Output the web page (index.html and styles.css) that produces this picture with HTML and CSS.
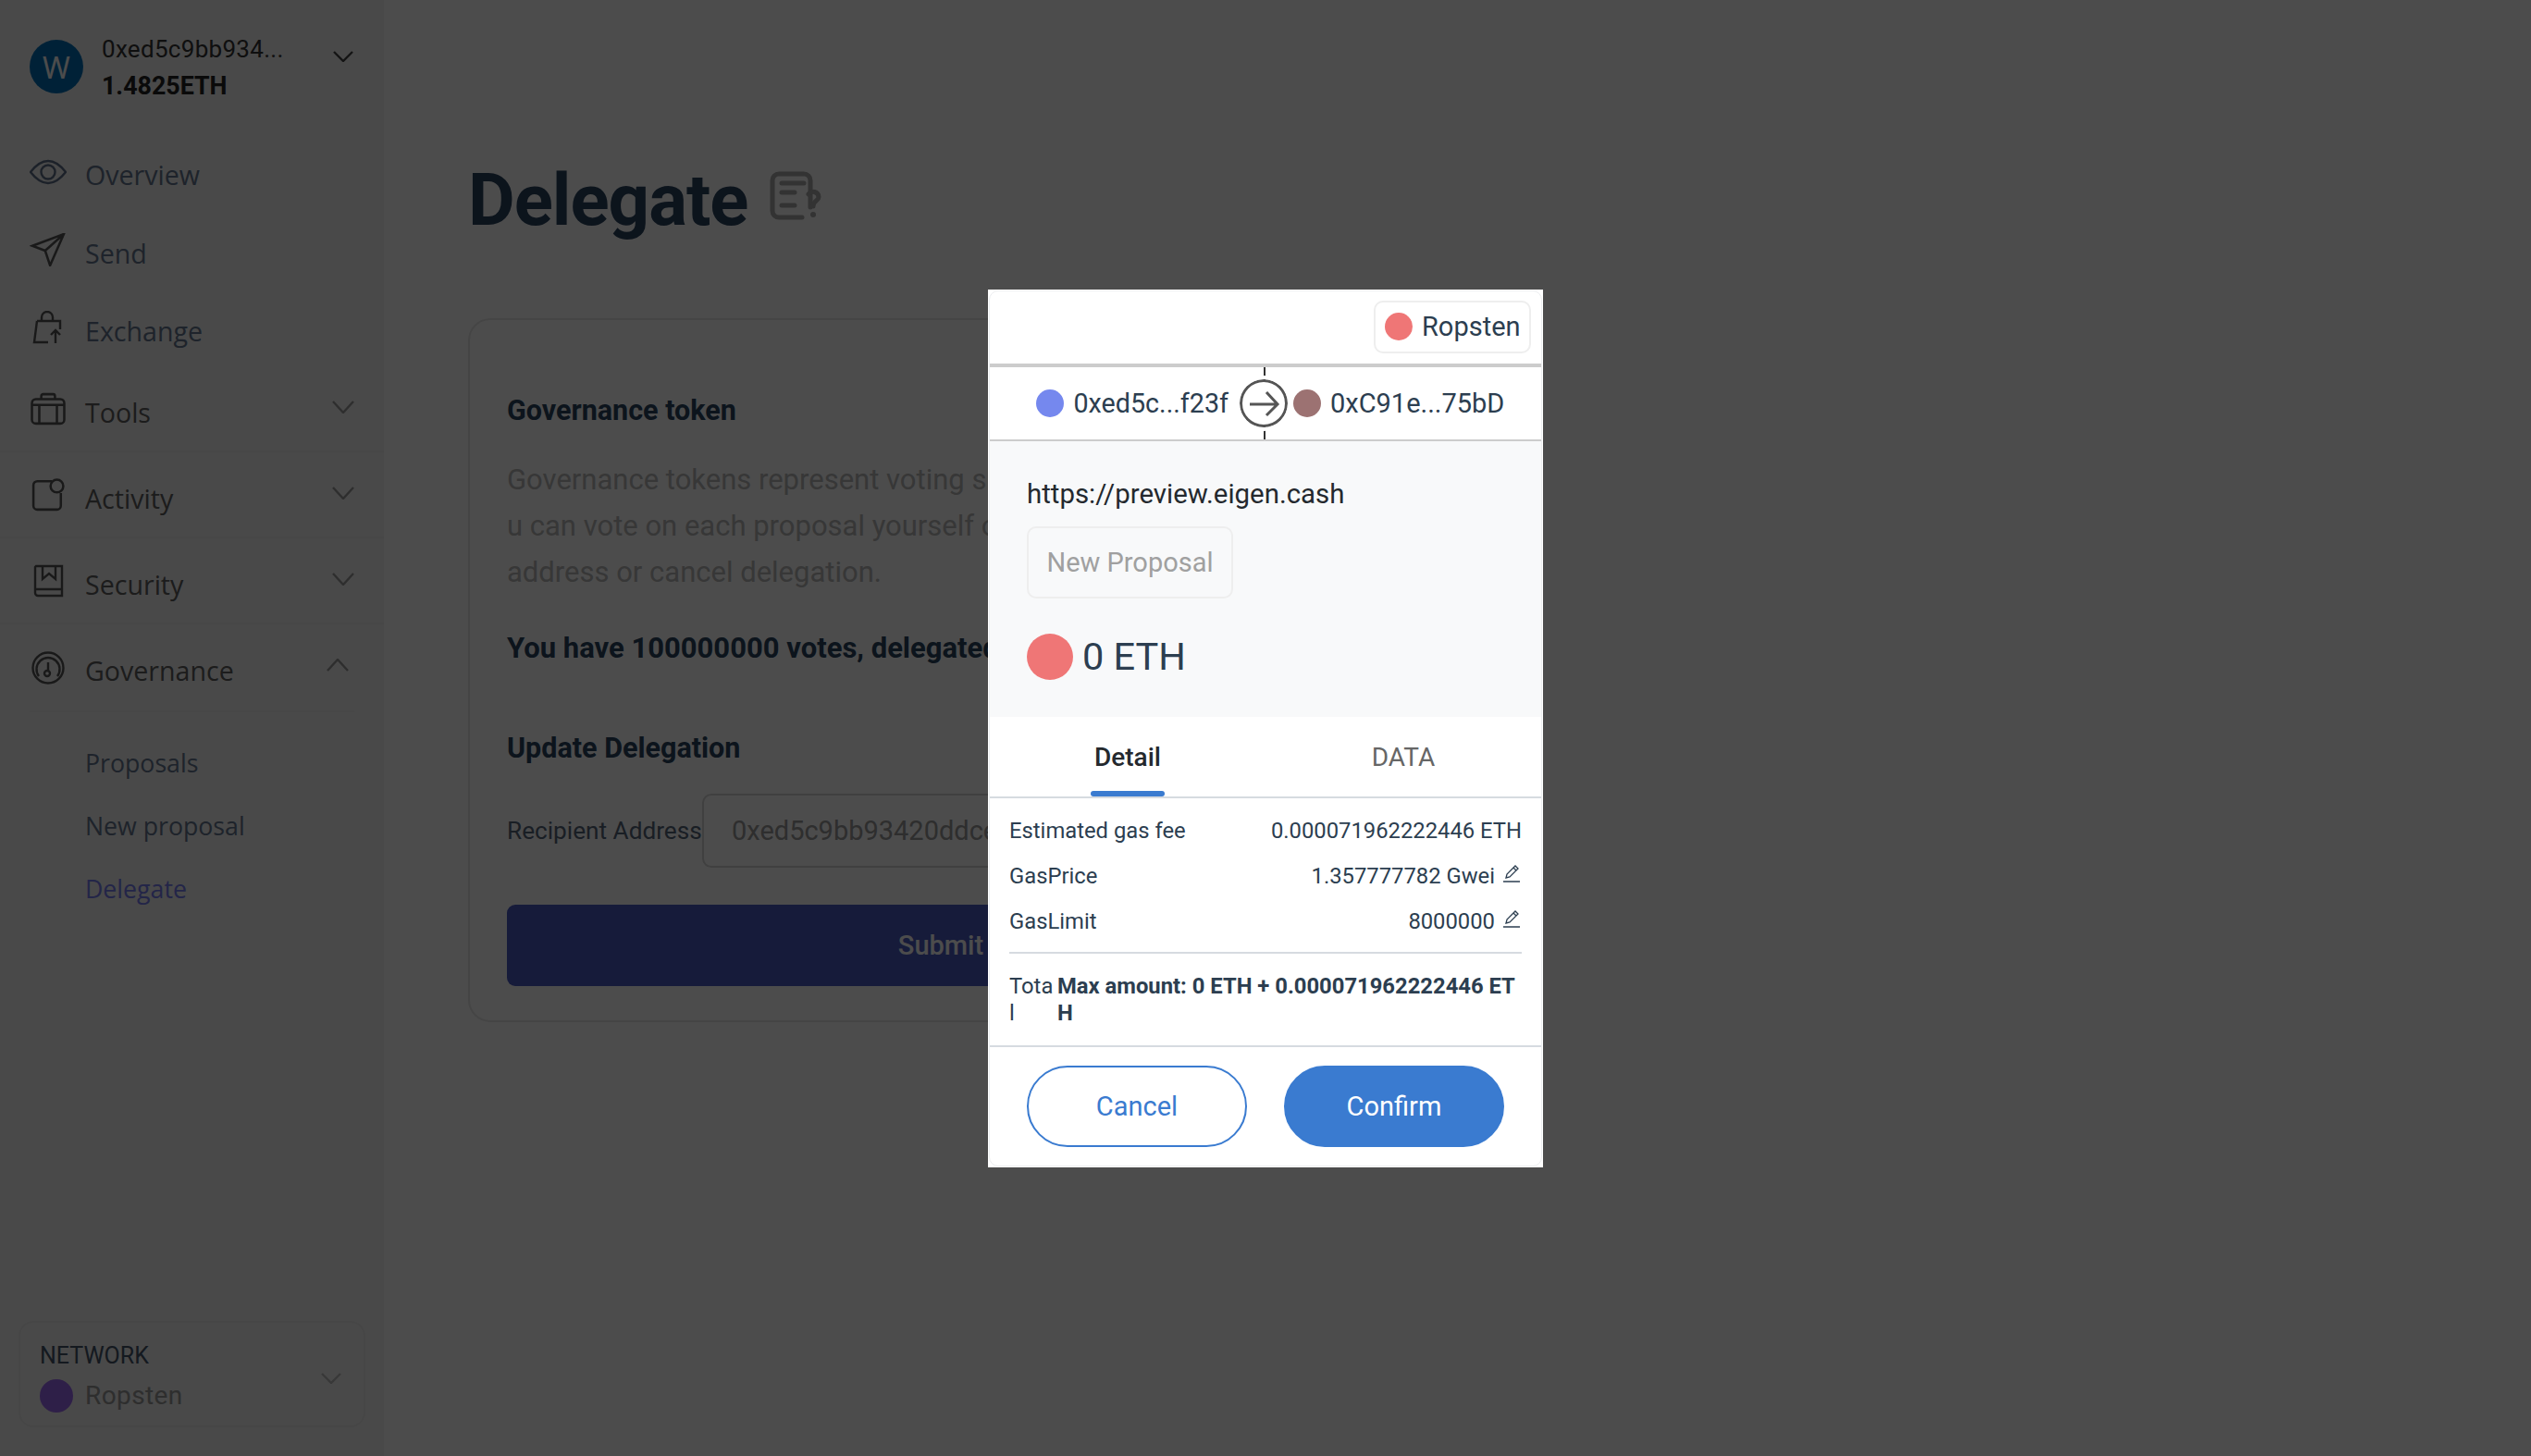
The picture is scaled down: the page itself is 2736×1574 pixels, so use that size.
FILE: index.html
```html
<!DOCTYPE html>
<html lang="en">
<head>
<meta charset="utf-8">
<title>Delegate</title>
<link rel="stylesheet" href="styles.css">
</head>
<body>
<div class="app">
  <aside class="sidebar">
    <div class="account">
      <div class="avatar">W</div>
      <div class="account-text">
        <div class="addr">0xed5c9bb934...</div>
        <div class="balance">1.4825ETH</div>
      </div>
      <svg class="chev chev-head" viewBox="0 0 22 12"><path d="M1 1 L11 11 L21 1"/></svg>
    </div>
    <nav class="nav">
      <div class="nav-row row-a row-first">
        <svg class="ico ico-eye" viewBox="0 0 40 26"><path d="M1 13C8 4 14 1 20 1C26 1 32 4 39 13C32 22 26 25 20 25C14 25 8 22 1 13Z"/><circle cx="20" cy="13" r="7.5"/></svg>
        <span class="nav-label">Overview</span>
      </div>
      <div class="nav-row row-a">
        <svg class="ico" viewBox="0 0 34 34"><path d="M1 13L33 1L19 33L14 18ZM14 18L33 1"/></svg>
        <span class="nav-label">Send</span>
      </div>
      <div class="nav-row row-a">
        <svg class="ico" viewBox="0 0 34 36"><path d="M10 11V7A6 6 0 0 1 22 7V11M5 11H30V20M5 11L2 34H17M25 35V21M20 26L25 21L30 26"/></svg>
        <span class="nav-label">Exchange</span>
      </div>
      <div class="nav-row row-b row-line">
        <svg class="ico" viewBox="0 0 36 34"><rect x="1.5" y="7" width="33" height="25" rx="4"/><path d="M11 7V4A2 2 0 0 1 13 2H23A2 2 0 0 1 25 4V7M1.5 13H34.500M9 13V32M27 13V32"/></svg>
        <span class="nav-label nav-dark">Tools</span>
        <svg class="chev chev-row" viewBox="0 0 24 14"><path d="M1 1L12 13L23 1"/></svg>
      </div>
      <div class="nav-row row-b row-line">
        <svg class="ico" viewBox="0 0 34 34"><path d="M21 3H6A4 4 0 0 0 2 7V28A4 4 0 0 0 6 32H26A4 4 0 0 0 30 28V15"/><circle cx="26" cy="8" r="6.500"/></svg>
        <span class="nav-label nav-dark">Activity</span>
        <svg class="chev chev-row" viewBox="0 0 24 14"><path d="M1 1L12 13L23 1"/></svg>
      </div>
      <div class="nav-row row-b row-line">
        <svg class="ico" viewBox="0 0 34 36"><path d="M4 2H32V34H6A3 3 0 0 1 3 31V3ZM3 27H32M11 2V16L18 10L25 16V2"/></svg>
        <span class="nav-label nav-dark">Security</span>
        <svg class="chev chev-row" viewBox="0 0 24 14"><path d="M1 1L12 13L23 1"/></svg>
      </div>
      <div class="nav-row row-b">
        <svg class="ico" viewBox="0 0 36 36"><circle cx="18" cy="18" r="16.500"/><path d="M8 27A12.500 12.500 0 1 1 28 27M18 12L18 21"/><circle cx="17" cy="24" r="3"/></svg>
        <span class="nav-label nav-gov">Governance</span>
        <svg class="chev chev-up" viewBox="0 0 24 14"><path d="M1 13L12 1L23 13"/></svg>
      </div>
      <div class="subnav">
        <div class="sub-item">Proposals</div>
        <div class="sub-item">New proposal</div>
        <div class="sub-item sub-active">Delegate</div>
      </div>
    </nav>
    <div class="network">
      <div class="network-text">
        <div class="network-title">NETWORK</div>
        <div class="network-line"><span class="network-dot"></span><span class="network-name">Ropsten</span></div>
      </div>
      <svg class="chev chev-net" viewBox="0 0 22 12"><path d="M1 1L11 11L21 1"/></svg>
    </div>
  </aside>
  <main class="main">
    <div class="page-head">
      <h1 class="page-title">Delegate</h1>
      <svg class="doc-ico" viewBox="0 0 56 56"><path d="M44 40V11A7 7 0 0 0 37 4H10A7 7 0 0 0 3 11V44A7 7 0 0 0 10 51H35M13 14H37M13 24H27M13 38H27" class="doc-line"/><path d="M42 26A6 6 0 0 1 53 29C53 33 47 33 47 39" class="doc-line"/><circle cx="47" cy="48" r="3" class="doc-dot"/></svg>
    </div>
    <section class="card">
      <h2 class="card-title">Governance token</h2>
      <p class="card-text">Governance tokens represent voting shares. Yo<br>u can vote on each proposal yourself or delegate<br>address or cancel delegation.</p>
      <p class="votes">You have 100000000 votes, delegated to yourself</p>
      <h2 class="card-title update-title">Update Delegation</h2>
      <div class="field">
        <label class="field-label">Recipient Address</label>
        <div class="field-input">0xed5c9bb93420ddce58f23f</div>
      </div>
      <div class="submit">Submit</div>
    </section>
  </main>
</div>
<div class="overlay">
  <div class="modal">
    <div class="modal-inner">
      <div class="modal-head">
        <div class="chip"><span class="dot dot-red"></span><span class="chip-text">Ropsten</span></div>
      </div>
      <div class="route">
        <div class="route-side route-from"><span class="dot dot-blue"></span><span>0xed5c...f23f</span></div>
        <div class="route-arrow">
          <svg class="arrow-svg" viewBox="0 0 52 52"><circle cx="26" cy="26" r="24.500"/><path d="M11 27H41M29 14L41 27L29 39"/></svg>
        </div>
        <div class="route-side route-to"><span class="dot dot-brown"></span><span>0xC91e...75bD</span></div>
      </div>
      <div class="summary">
        <div class="origin">https://preview.eigen.cash</div>
        <div class="method">New Proposal</div>
        <div class="amount"><span class="coin"></span><span>0 ETH</span></div>
      </div>
      <div class="tabs">
        <div class="tab tab-active"><span>Detail</span><i class="tab-bar"></i></div>
        <div class="tab"><span>DATA</span></div>
      </div>
      <div class="details">
        <div class="detail-row"><span>Estimated gas fee</span><span>0.000071962222446 ETH</span></div>
        <div class="detail-row"><span>GasPrice</span><span class="detail-val">1.357777782 Gwei<svg class="edit" viewBox="0 0 20 20"><path d="M1 19H19M4 15L5 11L14 2L17 5L8 14ZM12 4L15 7"/></svg></span></div>
        <div class="detail-row"><span>GasLimit</span><span class="detail-val">8000000<svg class="edit" viewBox="0 0 20 20"><path d="M1 19H19M4 15L5 11L14 2L17 5L8 14ZM12 4L15 7"/></svg></span></div>
        <div class="total">
          <span class="total-label">Total</span>
          <span class="total-val">Max amount: 0 ETH + 0.000071962222446 ETH</span>
        </div>
      </div>
      <div class="actions">
        <div class="btn btn-cancel">Cancel</div>
        <div class="btn btn-confirm">Confirm</div>
      </div>
    </div>
  </div>
</div>
</body>
</html>
```

FILE: styles.css
```css
* { box-sizing: border-box; }
html, body { margin: 0; padding: 0; height: 100%; }
body { background: #fff; font-family: Roboto, "Liberation Sans", sans-serif; color: #2b4360; overflow: hidden; }
.app { display: flex; height: 1574px; }

.sidebar { width: 415px; flex: none; background: #f4f4f4; display: flex; flex-direction: column; padding-bottom: 31px; }
.account { display: flex; padding: 43px 0 0 32px; height: 143px; }
.avatar { width: 58px; height: 58px; border-radius: 50%; background: #0070b8; color: #fff; font-size: 32px; font-family: "Noto Sans", sans-serif; display: flex; align-items: center; justify-content: center; flex: none; }
.account-text { margin: -9px 0 0 20px; width: 250px; }
.addr { font-size: 26px; line-height: 38px; color: #333; letter-spacing: .3px; }
.balance { font-size: 26.800px; line-height: 38px; font-weight: 700; color: #222; margin-top: 2px; }
.chev { fill: none; stroke: #999; stroke-width: 2.4; flex: none; }
.chev-head { width: 22px; height: 12px; margin-top: 12px; stroke: #444; }

.nav { display: flex; flex-direction: column; }
.nav-row { display: flex; align-items: center; padding-left: 32px; position: relative; }
.row-a { height: 84px; }
.row-first { height: 85px; }
.row-b { height: 93px; }
.row-line { border-bottom: 2px solid #efefef; }
.ico { width: 40px; height: 36px; fill: none; stroke: #555; stroke-width: 2.4; flex: none; }
.ico-eye { stroke: #60718a; }
.nav-label { margin: 6px 0 0 20px; font-family: "Open Sans", "Noto Sans", sans-serif; font-size: 28.600px; color: #64778f; flex: 1; }
.nav-dark { margin-top: 8px; color: #5e5e5e; }
.nav-gov { margin-top: 5px; color: #5e5e5e; }
.chev-row { width: 24px; height: 14px; margin-right: 32px; margin-top: -4px; }
.chev-up { width: 24px; height: 14px; margin-right: 38px; margin-top: -6px; }
.subnav { border-top: 2px solid #efefef; margin: 0 32px; padding-top: 20px; }
.sub-item { height: 68px; display: flex; align-items: center; padding-left: 60px; font-family: "Open Sans", "Noto Sans", sans-serif; font-size: 26.700px; color: #64778f; }
.sub-active { color: #757cf0; }

.network { margin: auto 20px 0; height: 115px; border: 2px solid #ececec; border-radius: 16px; display: flex; align-items: center; justify-content: space-between; padding: 0 24px 0 21px; }
.network-text { margin-top: 6px; }
.network-title { font-size: 25px; line-height: 30px; color: #45556a; }
.network-line { display: flex; align-items: center; margin-top: 10px; }
.network-dot { width: 36px; height: 36px; border-radius: 50%; background: #9c68f0; margin-right: 13px; }
.network-name { font-size: 28px; color: #999; letter-spacing: .4px; }
.chev-net { width: 22px; height: 12px; margin-top: 8px; stroke: #bbb; }

.main { flex: 1; padding: 0 0 0 91px; }
.page-head { display: flex; align-items: flex-start; height: 344px; padding-top: 166px; }
.page-title { margin: 3px 0 0; font-size: 78px; line-height: 96px; font-weight: 700; letter-spacing: -1px; color: #2b4360; }
.doc-ico { width: 56px; height: 56px; margin: 18px 0 0 24px; fill: none; }
.doc-line { fill: none; stroke: #aaa; stroke-width: 5; stroke-linecap: round; }
.doc-dot { fill: #aaa; }

.card { width: 1022px; height: 761px; border: 2px solid #e8e8e8; border-radius: 24px; padding: 78px 40px 0; }
.card-title { margin: 0; font-size: 30.500px; line-height: 40px; font-weight: 700; color: #2b4360; }
.card-text { margin: 30px 0 0; font-size: 31px; line-height: 50px; color: #b8b8b8; white-space: nowrap; }
.votes { margin: 32px 0 0; font-size: 31px; line-height: 50px; font-weight: 700; color: #2b4360; white-space: nowrap; }
.update-title { margin-top: 63px; }
.field { display: flex; align-items: center; margin-top: 29px; }
.field-label { font-size: 26.200px; color: #56657a; width: 211px; flex: none; white-space: nowrap; }
.field-input { flex: 1; height: 80px; border: 2px solid #d5d5d5; border-radius: 10px; padding: 0 30px; display: flex; align-items: center; font-size: 29px; color: #999; }
.submit { margin-top: 40px; height: 88px; border-radius: 9px; background: #4a5ac4; color: #fff; display: flex; align-items: center; justify-content: center; font-size: 29px; font-weight: 500; }

.overlay { position: fixed; inset: 0; background: rgba(0,0,0,.7); display: flex; align-items: center; justify-content: center; }
.modal { width: 600px; height: 949px; background: #fff; padding: 1px; color: #2c3e50; }
.modal-inner { height: 100%; border: 1px solid #eceef0; border-radius: 10px; display: flex; flex-direction: column; overflow: hidden; }
.modal-head { height: 82px; border-bottom: 4px solid #ccc; display: flex; justify-content: flex-end; align-items: flex-start; padding: 10px 11px 0 0; flex: none; }
.chip { width: 170px; height: 57px; border: 2px solid #eee; border-radius: 10px; display: flex; align-items: center; padding-left: 10px; gap: 10px; font-size: 29px; }
.dot { width: 30px; height: 30px; border-radius: 50%; flex: none; display: block; }
.dot-red { background: #ef7676; }
.dot-blue { background: #7588ee; }
.dot-brown { background: #9c7272; }
.route { height: 80px; border-bottom: 2px solid #ccc; display: flex; align-items: center; position: relative; flex: none; font-size: 28.700px; }
.route-side { display: flex; align-items: center; gap: 10px; }
.route-from { width: 258px; justify-content: flex-end; gap: 11px; }
.route-arrow { width: 52px; height: 78px; margin-left: 12px; position: relative; display: flex; align-items: center; justify-content: center; flex: none; }
.route-arrow::before { content: ""; position: absolute; left: 26px; top: 0; bottom: 0; width: 2px; background: #333; }
.arrow-svg { width: 52px; height: 52px; position: relative; fill: #fff; stroke: #555; stroke-width: 3; border-radius: 50%; box-shadow: 0 0 0 4px #fff; }
.arrow-svg path { fill: none; }
.route-to { margin-left: 6px; font-size: 29px; }
.summary { height: 298px; background: #f8f9fa; padding: 35px 40px 0; flex: none; }
.origin { font-size: 29.400px; line-height: 44px; color: #24292e; }
.method { width: 223px; height: 78px; margin-top: 13px; border: 2px solid #eee; border-radius: 10px; display: flex; align-items: center; justify-content: center; color: #a0a0a0; font-size: 29px; }
.amount { display: flex; align-items: center; gap: 10px; font-size: 41.500px; margin-top: 38px; }
.coin { width: 50px; height: 50px; border-radius: 50%; background: #ef7676; }
.tabs { height: 88px; border-bottom: 2px solid #d6dbe0; display: flex; flex: none; font-size: 28px; color: #666; }
.tab { flex: 1; display: flex; flex-direction: column; align-items: center; padding-top: 27px; position: relative; }
.tab-active { font-weight: 500; color: #24292e; }
.tab-bar { width: 80px; height: 6px; border-radius: 3px; background: #3a7bd0; position: absolute; bottom: 0; left: 50%; margin-left: -40px; }
.details { padding: 11px 21px 0; border-bottom: 2px solid #d6dbe0; height: 269px; flex: none; font-size: 23.800px; }
.detail-row { height: 49px; display: flex; align-items: center; justify-content: space-between; }
.detail-val { display: flex; align-items: center; }
.edit { width: 20px; height: 20px; margin: -6px 1px 0 8px; fill: none; stroke: #2c3e50; stroke-width: 1.300; }
.total { display: flex; margin-top: 8px; padding-top: 21px; border-top: 2px solid #d6dbe0; line-height: 29px; word-break: break-all; }
.total-label { width: 52px; flex: none; }
.total-val { font-weight: 700; flex: 1; }
.actions { display: flex; justify-content: space-between; padding: 20px 40px 0 40px; }
.btn { width: 238px; height: 88px; border-radius: 44px; display: flex; align-items: center; justify-content: center; font-size: 29px; border: 2px solid #3a7bd0; }
.btn-cancel { color: #3a7bd0; background: #fff; }
.btn-confirm { background: #3a7bd0; color: #fff; }
```
